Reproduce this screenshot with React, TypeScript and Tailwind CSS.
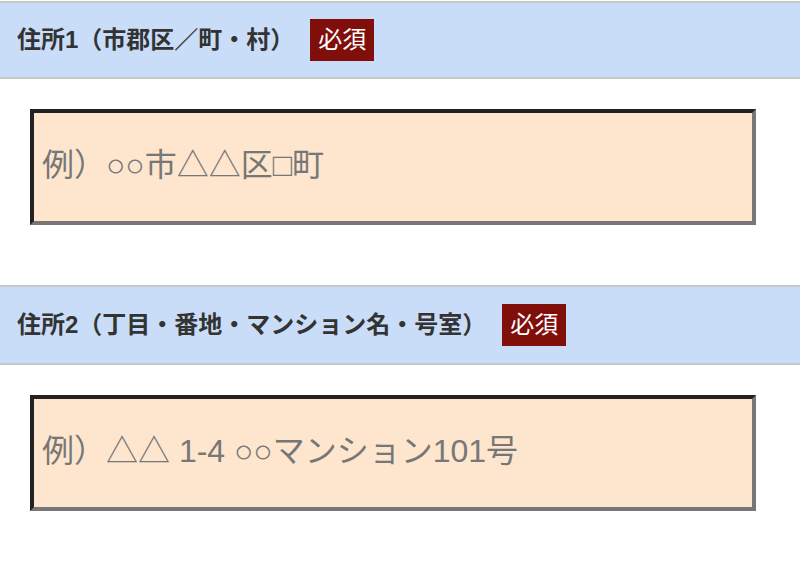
import React from "react";

const FONT = '"Liberation Sans", "Noto Sans CJK JP", sans-serif';

function Section({
  title,
  placeholder,
  headerH,
}: {
  title: string;
  placeholder: string;
  headerH: string;
}) {
  return (
    <div>
      <div
        className={`flex items-center border-y-2 border-[#c8c8c8] bg-[#c9ddf8] pl-[17px] ${headerH}`}
      >
        <span className="text-[24px] font-bold leading-none text-[#333333]">{title}</span>
        <span className="ml-[16px] flex h-[42px] w-[64px] items-center justify-center bg-[#800e0a] text-[24px] leading-none text-white">
          必須
        </span>
      </div>
      <div className="px-[30px] pt-[30px] pb-[60px]">
        <input
          type="text"
          placeholder={placeholder}
          className="box-border block h-[116px] w-[726px] border-4 border-t-[#222222] border-l-[#222222] border-b-[#777777] border-r-[#777777] bg-[#fde6cd] px-[8px] pb-[3px] text-[32px] text-[#333] outline-none placeholder:text-[#777777]"
          style={{ fontFamily: FONT }}
        />
      </div>
    </div>
  );
}

export default function App() {
  return (
    <div className="min-h-[571px] w-[800px] bg-white pt-[1px]" style={{ fontFamily: FONT }}>
      <Section
        title="住所1（市郡区／町・村）"
        placeholder="例）○○市△△区□町"
        headerH="h-[78px]"
      />
      <Section
        title="住所2（丁目・番地・マンション名・号室）"
        placeholder="例）△△ 1-4 ○○マンション101号"
        headerH="h-[80px]"
      />
    </div>
  );
}
